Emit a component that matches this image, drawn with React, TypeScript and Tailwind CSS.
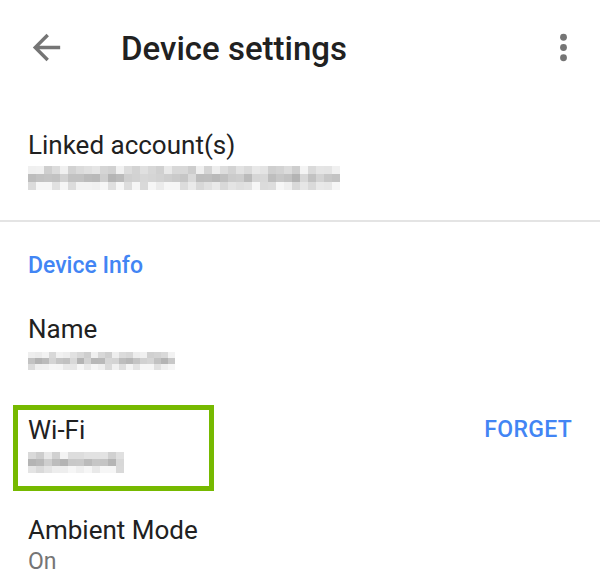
import React from 'react';

// Deterministic grey mosaic used to mask private values (email, device name, network)
function mosaicCells(cols: number, rows: number, seed: number) {
  let s = seed;
  const rand = () => {
    s = (s * 9301 + 49297) % 233280;
    return s / 233280;
  };
  const base = [224, 198, 236];
  const cells: string[][] = [];
  for (let r = 0; r < rows; r++) {
    const row: string[] = [];
    for (let c = 0; c < cols; c++) {
      const v = Math.round(base[r % 3] + (rand() - 0.5) * 40);
      const g = Math.max(160, Math.min(246, v));
      row.push(`rgb(${g},${g},${g})`);
    }
    cells.push(row);
  }
  return cells;
}

function Mosaic({ cols, rows, cell, rowH, seed }: { cols: number; rows: number; cell: number; rowH: number; seed: number }) {
  const cells = mosaicCells(cols, rows, seed);
  return (
    <div className="flex flex-col">
      {cells.map((row, r) => (
        <div key={r} className="flex">
          {row.map((color, c) => (
            <div key={c} style={{ width: cell, height: rowH, backgroundColor: color }} />
          ))}
        </div>
      ))}
    </div>
  );
}

export default function App() {
  return (
    <div className="w-[600px] h-[571px] overflow-hidden bg-white font-['Roboto',_'Liberation_Sans',_sans-serif] text-[#212121]">
      {/* Toolbar */}
      <div className="h-[94px] flex items-center">
        <div className="w-[121px] pl-[26px] flex items-center">
          <svg width="41" height="41" viewBox="0 0 24 24" fill="#757575">
            <path d="M20 11H7.83l5.59-5.59L12 4l-8 8 8 8 1.41-1.41L7.83 13H20v-2z" />
          </svg>
        </div>
        <h1 className="flex-1 text-[33px] leading-none font-medium pt-[3px]">Device settings</h1>
        <div className="pr-[16px] flex items-center">
          <svg width="41" height="41" viewBox="0 0 24 24" fill="#757575">
            <circle cx="12" cy="6" r="2" />
            <circle cx="12" cy="12" r="2" />
            <circle cx="12" cy="18" r="2" />
          </svg>
        </div>
      </div>

      {/* Account */}
      <div className="px-[28px] mt-[38px]">
        <p className="text-[26px] leading-none">Linked account(s)</p>
        <div className="mt-[8px]">
          <Mosaic cols={39} rows={3} cell={8} rowH={8} seed={17} />
        </div>
      </div>

      <div className="mt-[30px] h-[2px] bg-[#e4e4e4]" />

      {/* Device info */}
      <div className="px-[28px]">
        <p className="mt-[32px] text-[23px] leading-none font-medium text-[#4285f4]">Device Info</p>
        <p className="mt-[39px] text-[26px] leading-none">Name</p>
        <div className="mt-[10px]">
          <Mosaic cols={21} rows={3} cell={7} rowH={6} seed={91} />
        </div>
      </div>

      <div className="mt-[35px] pl-[13px] pr-[28px] flex items-start justify-between">
        <div className="w-[201px] h-[86px] border-[5px] border-[#76b900] pl-[10px] pt-[7px]">
          <p className="text-[26px] leading-none">Wi-Fi</p>
          <div className="mt-[9px]">
            <Mosaic cols={12} rows={3} cell={8} rowH={7} seed={53} />
          </div>
        </div>
        <button className="mt-[13px] text-[23px] leading-none font-medium text-[#4285f4] tracking-[0.3px]">FORGET</button>
      </div>

      <div className="px-[28px]">
        <p className="mt-[26px] text-[26px] leading-none">Ambient Mode</p>
        <p className="mt-[7px] text-[23px] leading-none text-[#757575]">On</p>
      </div>
    </div>
  );
}
